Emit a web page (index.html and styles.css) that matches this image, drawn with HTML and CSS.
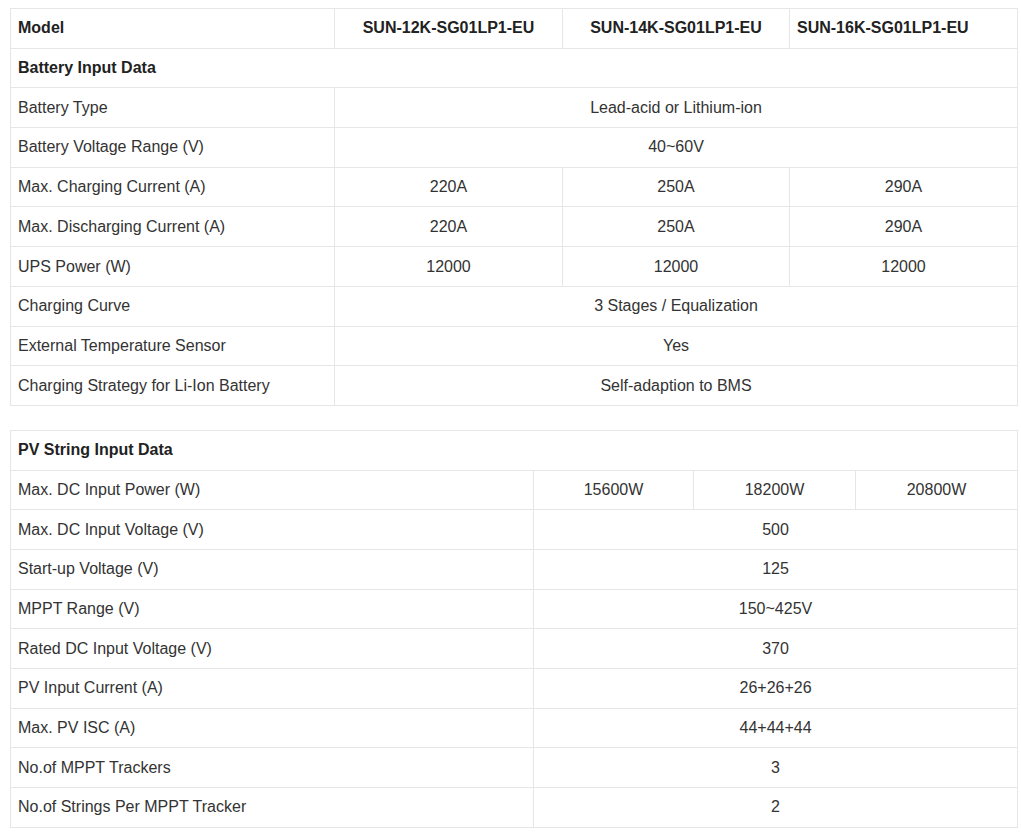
FILE: index.html
```html
<!DOCTYPE html>
<html lang="en">
<head>
<meta charset="utf-8">
<title>SUN-SG01LP1-EU Specifications</title>
<link rel="stylesheet" href="styles.css">
</head>
<body>
<table class="spec spec-battery">
  <colgroup>
    <col class="c1a"><col class="c2a"><col class="c3a"><col class="c4a">
  </colgroup>
  <tbody>
    <tr class="head"><td>Model</td><td class="mid">SUN-12K-SG01LP1-EU</td><td class="mid">SUN-14K-SG01LP1-EU</td><td>SUN-16K-SG01LP1-EU</td></tr>
    <tr class="head"><td colspan="4">Battery Input Data</td></tr>
    <tr><td>Battery Type</td><td colspan="3" class="mid">Lead-acid or Lithium-ion</td></tr>
    <tr><td>Battery Voltage Range (V)</td><td colspan="3" class="mid">40~60V</td></tr>
    <tr><td>Max. Charging Current (A)</td><td class="mid">220A</td><td class="mid">250A</td><td class="mid">290A</td></tr>
    <tr><td>Max. Discharging Current (A)</td><td class="mid">220A</td><td class="mid">250A</td><td class="mid">290A</td></tr>
    <tr><td>UPS Power (W)</td><td class="mid">12000</td><td class="mid">12000</td><td class="mid">12000</td></tr>
    <tr><td>Charging Curve</td><td colspan="3" class="mid">3 Stages / Equalization</td></tr>
    <tr><td>External Temperature Sensor</td><td colspan="3" class="mid">Yes</td></tr>
    <tr><td>Charging Strategy for Li-Ion Battery</td><td colspan="3" class="mid">Self-adaption to BMS</td></tr>
  </tbody>
</table>

<table class="spec spec-pv">
  <colgroup>
    <col class="c1b"><col class="c2b"><col class="c3b"><col class="c4b">
  </colgroup>
  <tbody>
    <tr class="head"><td colspan="4">PV String Input Data</td></tr>
    <tr><td>Max. DC Input Power (W)</td><td class="mid">15600W</td><td class="mid">18200W</td><td class="mid">20800W</td></tr>
    <tr><td>Max. DC Input Voltage (V)</td><td colspan="3" class="mid">500</td></tr>
    <tr><td>Start-up Voltage (V)</td><td colspan="3" class="mid">125</td></tr>
    <tr><td>MPPT Range (V)</td><td colspan="3" class="mid">150~425V</td></tr>
    <tr><td>Rated DC Input Voltage (V)</td><td colspan="3" class="mid">370</td></tr>
    <tr><td>PV Input Current (A)</td><td colspan="3" class="mid">26+26+26</td></tr>
    <tr><td>Max. PV ISC (A)</td><td colspan="3" class="mid">44+44+44</td></tr>
    <tr><td>No.of MPPT Trackers</td><td colspan="3" class="mid">3</td></tr>
    <tr><td>No.of Strings Per MPPT Tracker</td><td colspan="3" class="mid">2</td></tr>
  </tbody>
</table>
</body>
</html>
```

FILE: styles.css
```css
html, body {
  margin: 0;
  padding: 0;
  background: #ffffff;
}

body {
  padding: 8px 4px 0 10px;
  font-family: "Liberation Sans", Arial, sans-serif;
  font-size: 16px;
  color: #333333;
}

.spec {
  width: 1007px;
  border-collapse: collapse;
  table-layout: fixed;
  margin: 0 0 24px 0;
}

.spec td {
  border: 1px solid #e6e6e6;
  padding: 7.4px 7px 7.3px;
  line-height: 24px;
  text-align: left;
  vertical-align: middle;
  white-space: nowrap;
}

.spec td.mid {
  text-align: center;
}

.spec tr.head td {
  font-weight: bold;
  color: #222222;
}

.c1a { width: 324px; }
.c2a { width: 228px; }
.c3a { width: 227px; }
.c4a { width: 228px; }

.c1b { width: 523px; }
.c2b { width: 160px; }
.c3b { width: 162px; }
.c4b { width: 162px; }
```
